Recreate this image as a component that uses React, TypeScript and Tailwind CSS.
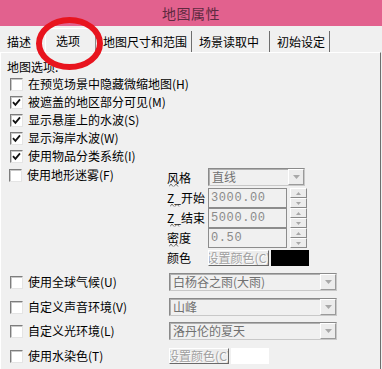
import React from "react";

const font = "font-['Noto_Sans_CJK_SC','Noto_Sans',sans-serif]";

function Box({ checked }: { checked?: boolean }) {
  return (
    <div className="w-[13px] h-[13px] shrink-0 bg-white border border-t-[#7d7d7d] border-l-[#7d7d7d] border-b-[#e4e4e4] border-r-[#e4e4e4] shadow-[inset_1px_1px_0_#c8c8c8] flex items-center justify-center">
      {checked && (
        <svg width="9" height="9" viewBox="0 0 9 9">
          <path d="M1 4.2 L3.4 6.8 L8 1.4" stroke="#111" strokeWidth="1.8" fill="none" />
        </svg>
      )}
    </div>
  );
}

function Check({ checked, label }: { checked?: boolean; label: string }) {
  return (
    <div className="flex items-center h-[18px] pl-[9px]">
      <Box checked={checked} />
      <span className="ml-[5px] text-[12px] leading-none text-black whitespace-nowrap">{label}</span>
    </div>
  );
}

function Arrow() {
  return (
    <svg width="7" height="4" viewBox="0 0 7 4">
      <path d="M0 0 L7 0 L3.5 4 Z" fill="#a8a8a8" />
    </svg>
  );
}

function Select({ text, className }: { text: string; className: string }) {
  return (
    <div
      className={`${className} h-[18px] flex bg-[#f0f0f0] border border-t-[#8a8a8a] border-l-[#8a8a8a] border-b-[#c8c8c8] border-r-[#c8c8c8] shadow-[inset_1px_1px_0_#b0b0b0]`}
    >
      <span className="flex-1 pl-[3px] text-[12px] leading-[16px] text-[#707070] whitespace-nowrap overflow-hidden">
        {text}
      </span>
      <div className="w-[16px] h-full bg-[#ececec] border border-t-white border-l-white border-b-[#9a9a9a] border-r-[#9a9a9a] flex items-center justify-center">
        <Arrow />
      </div>
    </div>
  );
}

function Spin() {
  return (
    <div className="ml-[3px] w-[17px] h-[20px] flex flex-col">
      <div className="flex-1 bg-[#ececec] border border-t-white border-l-white border-b-[#8a8a8a] border-r-[#8a8a8a] flex items-center justify-center">
        <svg width="5" height="3" viewBox="0 0 5 3">
          <path d="M0 3 L5 3 L2.5 0 Z" fill="#a8a8a8" />
        </svg>
      </div>
      <div className="flex-1 bg-[#ececec] border border-t-white border-l-white border-b-[#8a8a8a] border-r-[#8a8a8a] flex items-center justify-center">
        <svg width="5" height="3" viewBox="0 0 5 3">
          <path d="M0 0 L5 0 L2.5 3 Z" fill="#a8a8a8" />
        </svg>
      </div>
    </div>
  );
}

function NumInput({ value }: { value: string }) {
  return (
    <div className="flex">
      <div className="w-[79px] h-[20px] border border-[#8c8c8c] bg-[#f0f0f0] pl-[2px] text-[12px] leading-[18px] text-[#8a8a8a] tracking-[0.6px] font-['Liberation_Mono',monospace]">
        {value}
      </div>
      <Spin />
    </div>
  );
}

function ColorButton({ className }: { className: string }) {
  return (
    <div
      className={`${className} h-[16px] overflow-hidden bg-[#ececec] border border-t-white border-l-white border-b-[#696969] border-r-[#696969] flex items-center justify-center`}
    >
      <span className="text-[12px] leading-none whitespace-nowrap text-[#a0a0a0] [text-shadow:1px_1px_0_#ffffff]">
        设置颜色(C)
      </span>
    </div>
  );
}

function Squiggle({ left, top }: { left: number; top: number }) {
  return (
    <svg
      className="absolute"
      style={{ left, top }}
      width="10"
      height="4"
      viewBox="0 0 10 4"
    >
      <path d="M0 3.5 L2 1 L4 3.5 M5 3.5 L7 1 L9 3.5" stroke="#555" strokeWidth="0.8" fill="none" />
    </svg>
  );
}

function FogLabel({ text, mark, markLeft }: { text: string; mark?: boolean; markLeft?: number }) {
  return (
    <div className="relative w-[41px] h-full flex items-center text-[12px] leading-none text-black whitespace-nowrap">
      {text}
      {mark && <Squiggle left={markLeft ?? 2} top={15} />}
    </div>
  );
}

export default function App() {
  return (
    <div className={`${font} relative w-[382px] h-[369px] overflow-hidden bg-[#f0f0f0]`}>
      {/* title bar */}
      <div className="h-[26px] bg-[#e2618e] flex items-center justify-center">
        <span className="text-[14px] tracking-[0.5px] text-[#5e2a40] leading-none">地图属性</span>
      </div>

      {/* tabs */}
      <div className="h-[26px] flex items-end text-[12px] text-black">
        <div className="w-[45px] h-[21px] pl-[7px] flex items-center">描述</div>
        <div className="w-[51px] h-[24px] pl-[10px] flex items-center bg-[#f0f0f0] border-t border-l border-white border-r border-r-[#8a8a8a]">
          选项
        </div>
        <div className="w-[96px] h-[21px] pl-[7px] flex items-center border-r border-[#6e6e6e]">地图尺寸和范围</div>
        <div className="w-[78px] h-[21px] pl-[7px] flex items-center border-r border-[#6e6e6e]">场景读取中</div>
        <div className="w-[60px] h-[21px] pl-[7px] flex items-center border-r border-[#6e6e6e]">初始设定</div>
      </div>

      {/* panel */}
      <div className="w-[381px] h-[317px] border-t border-white border-l border-l-white border-r border-r-[#6e6e6e]">
        <div className="h-[16px] mt-[6px] pl-[6px] flex items-center text-[12px] leading-none text-black">
          地图选项:
        </div>
        <Check label="在预览场景中隐藏微缩地图(H)" />
        <Check checked label="被遮盖的地区部分可见(M)" />
        <Check checked label="显示悬崖上的水波(S)" />
        <Check checked label="显示海岸水波(W)" />
        <Check checked label="使用物品分类系统(I)" />

        {/* fog block */}
        <div className="flex mt-[2px]">
          <div className="w-[167px] h-[16px] -ml-px">
            <div className="flex items-center h-[16px] pl-[9px]">
              <Box />
              <span className="ml-[5px] text-[12px] leading-none text-black whitespace-nowrap">使用地形迷雾(F)</span>
            </div>
          </div>
          <div className="mt-[1px] flex flex-col">
            <div className="h-[20px] flex">
              <FogLabel text="风格" mark markLeft={2} />
              <Select text="直线" className="w-[97px]" />
            </div>
            <div className="h-[20px] flex">
              <FogLabel text="Z_开始" mark markLeft={3} />
              <NumInput value="3000.00" />
            </div>
            <div className="h-[20px] flex">
              <FogLabel text="Z_结束" mark markLeft={3} />
              <NumInput value="5000.00" />
            </div>
            <div className="h-[20px] flex">
              <FogLabel text="密度" mark markLeft={2} />
              <NumInput value="0.50" />
            </div>
            <div className="h-[20px] flex items-center">
              <FogLabel text="颜色" />
              <ColorButton className="w-[61px]" />
              <div className="ml-[2px] w-[38px] h-[16px] bg-black" />
            </div>
          </div>
        </div>

        {/* bottom rows */}
        <div className="flex items-center mt-[5px]">
          <div className="w-[168px]">
            <Check label="使用全球气候(U)" />
          </div>
          <Select text="白杨谷之雨(大雨)" className="w-[168px]" />
        </div>
        <div className="flex items-center mt-[7px]">
          <div className="w-[168px]">
            <Check label="自定义声音环境(V)" />
          </div>
          <Select text="山峰" className="w-[168px]" />
        </div>
        <div className="flex items-center mt-[6px]">
          <div className="w-[168px]">
            <Check label="自定义光环境(L)" />
          </div>
          <Select text="洛丹伦的夏天" className="w-[168px]" />
        </div>
        <div className="flex items-center mt-[7px]">
          <div className="w-[168px]">
            <Check label="使用水染色(T)" />
          </div>
          <ColorButton className="w-[60px]" />
          <div className="ml-[2px] w-[38px] h-[16px] bg-white" />
        </div>
        <div className="ml-[118px] mt-[4px] w-[244px] h-[2px] bg-[#a0a0a0]" />
      </div>

      {/* red annotation circle */}
      <div className="absolute left-[36px] top-[17px] w-[67px] h-[53px] rounded-[50%] border-[6px] border-[#e8141e]" />
    </div>
  );
}
